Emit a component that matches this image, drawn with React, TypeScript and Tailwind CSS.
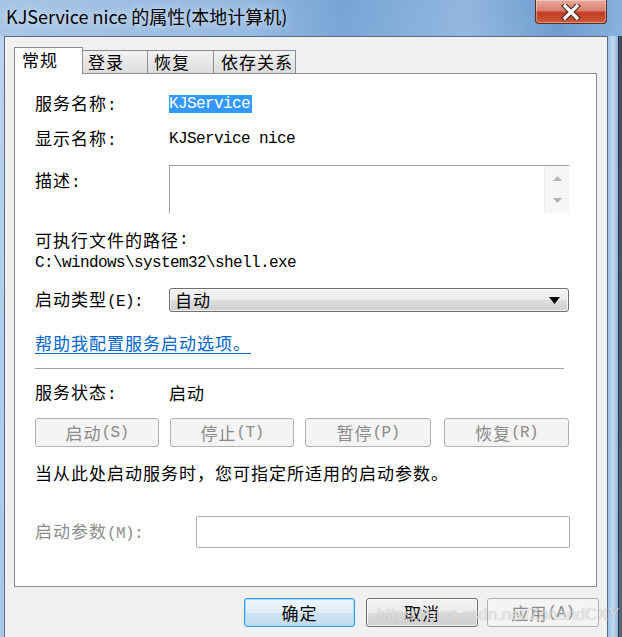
import React from "react";

const MONO = "font-['Liberation_Mono',monospace] text-[16px] tracking-[-0.6px]";
const CJK = "font-['Noto_Sans_CJK_SC',sans-serif] text-[17px] tracking-[1px]";

function T({ t }: { t: string }) {
  const parts = t.split(/([\x00-\x7f]+)/).filter(Boolean);
  return (
    <>
      {parts.map((p, i) =>
        /^[\x00-\x7f]+$/.test(p) ? (
          <span key={i} className={MONO}>
            {p}
          </span>
        ) : (
          <span key={i} className={CJK}>
            {p}
          </span>
        )
      )}
    </>
  );
}

function DisBtn({ t, w }: { t: string; w: string }) {
  return (
    <div
      className={`${w} h-[29px] flex items-center justify-center rounded-[3px] border border-[#adb2b5] bg-[#f4f4f4] text-[#8a8a8a] leading-[20px]`}
    >
      <T t={t} />
    </div>
  );
}

export default function App() {
  return (
    <div className="relative w-[622px] h-[637px] overflow-hidden flex flex-col bg-[linear-gradient(180deg,#7ea9d8_0%,#93bde6_40%,#b3d6f4_100%)] text-black">
      {/* Title bar */}
      <div className="relative h-[36px] flex items-start shrink-0 bg-[linear-gradient(90deg,rgba(200,220,240,0.55)_0%,rgba(190,212,236,0.35)_40%,rgba(80,130,190,0.15)_55%,rgba(190,215,240,0.3)_75%,rgba(60,110,170,0.25)_90%,rgba(170,200,235,0.2)_100%)]">
        <div className="pl-[6px] pt-[4px] text-[18px] leading-[24px] font-['Noto_Sans_CJK_SC',sans-serif] text-black [text-shadow:0_0_8px_rgba(255,255,255,0.9)]">
          KJService nice 的属性(本地计算机)
        </div>
        <div className="ml-auto mr-[15px] w-[72px] h-[24px] rounded-b-[4px] border border-t-0 border-[#5a2c24] bg-[linear-gradient(180deg,#e9a99c_0%,#d9826f_45%,#c13b23_55%,#cf5a3c_100%)] flex items-center justify-center shadow-[inset_0_0_0_1px_rgba(255,255,255,0.35)]">
          <svg width="20" height="16" viewBox="0 0 20 16">
            <path d="M4 2 L16 14 M16 2 L4 14" stroke="#4a2a26" strokeWidth="5.5" strokeLinecap="square" />
            <path d="M4 2 L16 14 M16 2 L4 14" stroke="#ffffff" strokeWidth="3.2" strokeLinecap="square" />
          </svg>
        </div>
      </div>

      {/* Body */}
      <div className="flex flex-1 min-h-0">
        <div className="w-[4px] shrink-0 bg-[linear-gradient(180deg,#b9d4ee,#a8c9ea)]" />
        <div className="w-[604px] shrink-0 border-l border-t border-r border-[#5b6c80] bg-[#f0f0f0] flex flex-col pl-[9px] pt-[10px]">
          {/* Tabs */}
          <div className="flex items-end h-[26px] relative z-10">
            <div className="w-[69px] h-[27px] bg-white border border-b-0 border-[#898c95] pl-[7px] pt-[1px] leading-[22px] -mb-[1px]">
              <T t="常规" />
            </div>
            <div className="w-[66px] h-[23px] -ml-[1px] border border-b-0 border-[#898c95] bg-[linear-gradient(180deg,#f2f2f2,#dcdcdc)] pl-[5px] leading-[22px]">
              <T t="登录" />
            </div>
            <div className="w-[67px] h-[23px] -ml-[1px] border border-b-0 border-[#898c95] bg-[linear-gradient(180deg,#f2f2f2,#dcdcdc)] pl-[6px] leading-[22px]">
              <T t="恢复" />
            </div>
            <div className="w-[83px] h-[23px] -ml-[1px] border border-b-0 border-[#898c95] bg-[linear-gradient(180deg,#f2f2f2,#dcdcdc)] pl-[7px] leading-[22px]">
              <T t="依存关系" />
            </div>
          </div>

          {/* Panel */}
          <div className="w-[583px] h-[514px] border border-[#898c95] bg-white pl-[20px] flex flex-col leading-[20px]">
            <div className="mt-[20px] flex h-[20px] items-center">
              <div className="w-[134px]">
                <T t="服务名称:" />
              </div>
              <div className="h-[18px] leading-[18px] bg-[#3399ff] text-white pr-[2px] flex items-center">
                <span className={MONO}>KJService</span>
              </div>
            </div>

            <div className="mt-[15px] flex h-[20px] items-center">
              <div className="w-[134px]">
                <T t="显示名称:" />
              </div>
              <T t="KJService nice" />
            </div>

            <div className="mt-[16px] flex h-[48px] items-start">
              <div className="w-[134px] pt-[5px]">
                <T t="描述:" />
              </div>
              <div className="w-[400px] h-[48px] border-t border-l border-[#a0a0a0] flex justify-end">
                <div className="w-[25px] h-full bg-[#f6f6f6] border-l border-[#ececec] flex flex-col items-center justify-between py-[10px]">
                  <svg width="9" height="5" viewBox="0 0 9 5">
                    <path d="M0 5 L4.5 0 L9 5 Z" fill="#b4b4b4" />
                  </svg>
                  <svg width="9" height="5" viewBox="0 0 9 5">
                    <path d="M0 0 L4.5 5 L9 0 Z" fill="#b4b4b4" />
                  </svg>
                </div>
              </div>
            </div>

            <div className="mt-[17px] h-[20px] flex items-center">
              <T t="可执行文件的路径:" />
            </div>
            <div className="mt-[3px] h-[20px] flex items-center">
              <T t="C:\windows\system32\shell.exe" />
            </div>

            <div className="mt-[15px] flex h-[24px] items-center">
              <div className="w-[134px]">
                <T t="启动类型(E):" />
              </div>
              <div className="w-[400px] h-[24px] rounded-[3px] border border-[#707070] bg-[linear-gradient(180deg,#f2f2f2_0%,#ebebeb_50%,#dddddd_51%,#cfcfcf_100%)] flex items-center pl-[5px] pr-[8px] shadow-[inset_0_0_0_1px_rgba(255,255,255,0.7)]">
                <T t="自动" />
                <svg className="ml-auto" width="11" height="7" viewBox="0 0 11 7">
                  <path d="M0 0 L11 0 L5.5 7 Z" fill="#000" />
                </svg>
              </div>
            </div>

            <div className="mt-[21px] h-[20px] flex items-center">
              <span className="text-[#0066cc] underline decoration-[#0066cc] underline-offset-[3px]">
                <T t="帮助我配置服务启动选项。" />
              </span>
            </div>

            <div className="mt-[15px] w-[529px] h-[1px] bg-[#a0a0a0]" />

            <div className="mt-[14px] flex h-[20px] items-center">
              <div className="w-[134px]">
                <T t="服务状态:" />
              </div>
              <T t="启动" />
            </div>

            <div className="mt-[15px] flex items-center">
              <DisBtn t="启动(S)" w="w-[124px]" />
              <div className="ml-[11px]">
                <DisBtn t="停止(T)" w="w-[124px]" />
              </div>
              <div className="ml-[11px]">
                <DisBtn t="暂停(P)" w="w-[126px]" />
              </div>
              <div className="ml-[13px]">
                <DisBtn t="恢复(R)" w="w-[125px]" />
              </div>
            </div>

            <div className="mt-[16px] h-[20px] flex items-center">
              <T t="当从此处启动服务时，您可指定所适用的启动参数。" />
            </div>

            <div className="mt-[33px] flex h-[32px] items-center">
              <div className="w-[161px] text-[#8d8d8d]">
                <T t="启动参数(M):" />
              </div>
              <div className="w-[374px] h-[32px] rounded-[2px] border border-[#abadb3] bg-white" />
            </div>
          </div>

          {/* Bottom buttons */}
          <div className="mt-[11px] flex items-center leading-[20px]">
            <div className="ml-[230px] w-[111px] h-[29px] rounded-[3px] border border-[#3399ff] bg-[linear-gradient(180deg,#eef6fc_0%,#e0eef9_50%,#cfe3f3_51%,#c3dbee_100%)] flex items-center justify-center shadow-[inset_0_0_0_1px_#a9d8fb]">
              <T t="确定" />
            </div>
            <div className="ml-[11px] w-[112px] h-[29px] rounded-[3px] border border-[#707070] bg-[linear-gradient(180deg,#f2f2f2_0%,#ebebeb_50%,#dddddd_51%,#cfcfcf_100%)] flex items-center justify-center shadow-[inset_0_0_0_1px_rgba(255,255,255,0.7)]">
              <T t="取消" />
            </div>
            <div className="ml-[9px] w-[112px] h-[29px] rounded-[3px] border border-[#adb2b5] bg-[#f4f4f4] flex items-center justify-center text-[#8a8a8a]">
              <T t="应用(A)" />
            </div>
          </div>
        </div>
        <div className="w-[10px] shrink-0 bg-[linear-gradient(90deg,#9cc0e4,#c4dcf2_50%,#8fb3d8)]" />
        <div className="w-[1px] shrink-0 bg-[#2a3645]" />
        <div className="w-[3px] shrink-0 bg-[linear-gradient(180deg,#3d4c5e,#55677a)]" />
      </div>

      {/* Watermark overlay */}
      <div className="absolute left-[377px] top-[603px] text-[16.5px] leading-[22px] font-['Liberation_Sans',sans-serif] text-white/60 [text-shadow:0_0_1px_rgba(110,110,110,0.5)] pointer-events-none">
        https://blog.csdn.net/ZohandCXY
      </div>
    </div>
  );
}
